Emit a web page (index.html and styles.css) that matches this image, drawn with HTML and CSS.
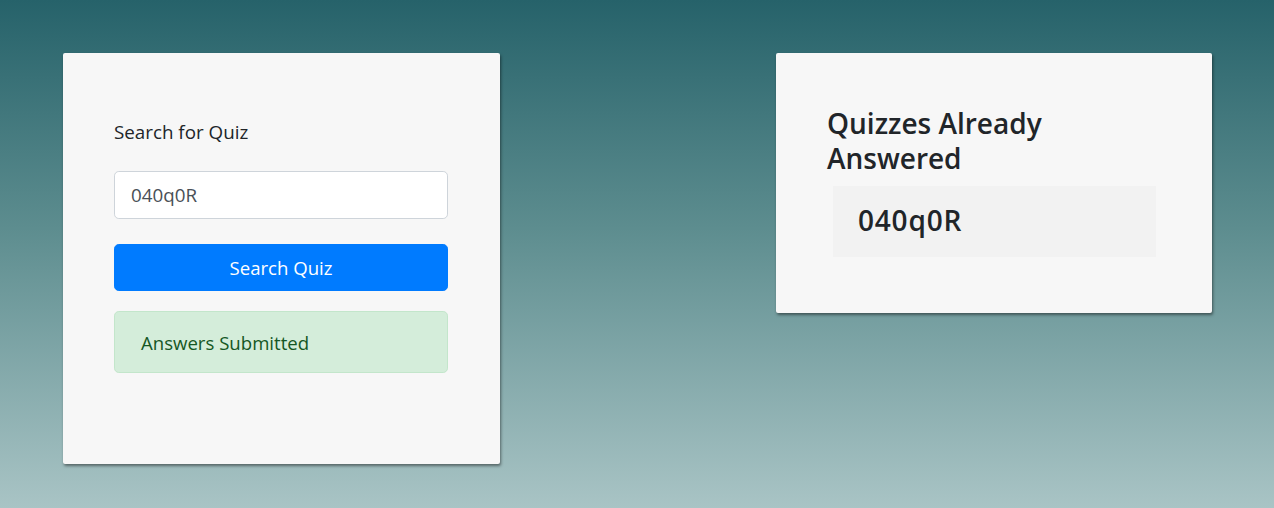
FILE: index.html
```html
<!DOCTYPE html>
<html>
<head>
<meta charset="utf-8">
<link rel="stylesheet" href="styles.css">
</head>
<body>
<div class="page">
  <div class="card card-search">
    <label class="label" for="q">Search for Quiz</label>
    <input class="input" id="q" type="text" value="040q0R">
    <button class="btn">Search Quiz</button>
    <div class="alert">Answers Submitted</div>
  </div>
  <div class="card card-answered">
    <h3 class="heading">Quizzes Already Answered</h3>
    <div class="item">040q0R</div>
  </div>
</div>
</body>
</html>
```
FILE: styles.css
```css
* { box-sizing: border-box; }
html, body { margin: 0; height: 100%; }
body {
  font-family: "Open Sans", "Noto Sans", sans-serif;
  color: #212529;
  background: linear-gradient(to bottom, #26626a 0%, #5d8d8f 45%, #a9c4c5 100%);
  min-height: 508px;
}
.page {
  display: flex;
  justify-content: space-between;
  align-items: flex-start;
  padding: 53px 62px 0 63px;
}
.card {
  background: #f7f7f7;
  border-radius: 2px;
  box-shadow: 1px 2px 3px rgba(0, 0, 0, 0.45);
}
.card-search {
  width: 437px;
  height: 411px;
  padding: 50px 52px 0 51px;
  display: flex;
  flex-direction: column;
}
.label {
  font-size: 18.8px;
  line-height: 30px;
  margin-top: 14px;
  color: #212529;
}
.input {
  margin-top: 24px;
  height: 48px;
  width: 100%;
  border: 1px solid #ced4da;
  border-radius: 4.8px;
  background: #fff;
  padding: 0 16px;
  font-family: inherit;
  font-size: 18.8px;
  color: #495057;
  outline: none;
}
.btn {
  margin-top: 25px;
  height: 47px;
  width: 100%;
  border: 1px solid #007bff;
  background: #007bff;
  color: #fff;
  border-radius: 4.8px;
  font-family: inherit;
  font-size: 18.6px;
  padding: 0;
}
.alert {
  margin-top: 20px;
  height: 62px;
  background: #d4edda;
  border: 1px solid #c3e6cb;
  border-radius: 4.8px;
  color: #155724;
  font-size: 18.6px;
  display: flex;
  align-items: center;
  padding: 0 26px;
}
.card-answered {
  width: 436px;
  height: 260px;
  padding: 53px 56px 0 51px;
}
.heading {
  margin: 0;
  font-size: 28px;
  font-weight: 600;
  line-height: 35px;
  color: #212529;
}
.item {
  margin: 10px 0 0 6px;
  height: 71px;
  width: 323px;
  background: #f2f2f2;
  display: flex;
  align-items: center;
  padding: 0 0 4px 25px;
  font-size: 28px;
  font-weight: 600;
  letter-spacing: 0.8px;
  color: #212529;
}
```
